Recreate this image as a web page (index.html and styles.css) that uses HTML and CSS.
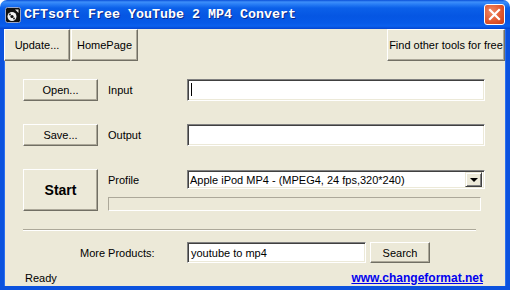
FILE: index.html
```html
<!DOCTYPE html>
<html lang="en">
<head>
  <meta charset="UTF-8">
  <title>CFTsoft Free YouTube 2 MP4 Convert</title>
  <link rel="stylesheet" href="styles.css">
</head>
<body>
  <div class="window">
    <div class="titlebar">
      <svg class="app-icon" width="16" height="16" viewBox="0 0 16 16">
        <rect x="0.5" y="0.5" width="15" height="15" rx="2" fill="#101010" stroke="#9aa6c8"/>
        <circle cx="7" cy="9.5" r="4.5" fill="#f2f2f2"/>
        <circle cx="7" cy="9.5" r="1.6" fill="#101010"/>
        <circle cx="5" cy="7.5" r="0.9" fill="#101010"/>
        <circle cx="9" cy="11.5" r="0.9" fill="#101010"/>
        <path d="M10 2.5 L13.5 2.5 L13.5 6 Z" fill="#e8e8e8"/>
      </svg>
      <span class="title">CFTsoft Free YouTube 2 MP4 Convert</span>
      <div class="close">
        <svg width="21" height="21" viewBox="0 0 21 21">
          <path d="M6 6 L15 15 M15 6 L6 15" stroke="#fff" stroke-width="2.2" stroke-linecap="square"/>
        </svg>
      </div>
    </div>

    <div class="client">
      <div class="toolbar">
        <button class="btn tb-update">Update...</button>
        <button class="btn tb-home">HomePage</button>
        <button class="btn tb-find">Find other tools for free</button>
      </div>

      <div class="form">
        <div class="row first">
          <button class="btn side">Open...</button>
          <span class="label">Input</span>
          <div class="field"><span class="caret"></span></div>
        </div>

        <div class="row">
          <button class="btn side">Save...</button>
          <span class="label">Output</span>
          <div class="field"></div>
        </div>

        <div class="row start-row">
          <button class="btn start">Start</button>
          <div class="profile-block">
            <div class="profile-line">
              <span class="label profile-label">Profile</span>
              <div class="select">
                <span class="select-text">Apple iPod MP4 - (MPEG4, 24 fps,320*240)</span>
                <span class="drop"><span class="arrow"></span></span>
              </div>
            </div>
            <div class="progress"></div>
          </div>
        </div>

        <div class="separator"></div>

        <div class="more-row">
          <span class="more-label">More Products:</span>
          <div class="field small">youtube to mp4</div>
          <button class="btn search">Search</button>
        </div>
      </div>

      <div class="status">
        <span>Ready</span>
        <a class="site-link" href="#">www.changeformat.net</a>
      </div>
    </div>
  </div>
</body>
</html>
```

FILE: styles.css
```css
* {
  box-sizing: border-box;
}
body {
  margin: 0;
  background: #fff;
  font-family: "Liberation Sans", Arial, sans-serif;
  font-size: 11px;
  color: #000;
}
.window {
  width: 510px;
  height: 290px;
  display: flex;
  flex-direction: column;
}

/* title bar */
.titlebar {
  height: 29px;
  flex: none;
  display: flex;
  align-items: center;
  padding: 0 5px;
  border-radius: 7px 7px 0 0;
  background: linear-gradient(#0a4fd8 0px, #3d8ffa 2px, #2a7ff6 4px, #0b60e9 8px, #0556e3 16px, #0659e8 23px, #0b60ee 26px, #0344d0 29px);
  color: #fff;
}
.app-icon {
  flex: none;
  margin-right: 3px;
}
.title {
  flex: 1;
  font-family: "Liberation Mono", "Courier New", monospace;
  font-weight: bold;
  font-size: 13.33px;
  text-shadow: 1px 1px #0a2a8a;
  white-space: nowrap;
}
.close {
  width: 21px;
  height: 21px;
  border: 1px solid #fff;
  border-radius: 3px;
  background: radial-gradient(circle at 35% 35%, #f08a66, #e0552c 60%, #c63d17);
}
.close svg {
  display: block;
  margin: -1px;
}

/* client area */
.client {
  flex: 1;
  display: flex;
  flex-direction: column;
  background: #ece9d8;
  border: 4px solid #0b52de;
  border-top: 0;
  box-shadow: inset 1px 0 #2a6ff0, inset -1px 0 #2a6ff0;
}
.btn {
  font: inherit;
  color: #000;
  background: #ece9d8;
  border: 1px solid;
  border-color: #fff #716f64 #716f64 #fff;
  box-shadow: inset -1px -1px #aca899;
  padding: 0;
}
.toolbar {
  display: flex;
  height: 32px;
  flex: none;
}
.tb-update {
  width: 66px;
}
.tb-home {
  width: 67px;
  margin-left: 1px;
}
.tb-find {
  width: 118px;
  margin-left: auto;
  margin-right: 1px;
}

.form {
  padding-left: 19px;
}
.row {
  display: flex;
  align-items: center;
  height: 22px;
  margin-top: 23px;
}
.row.first {
  margin-top: 18px;
}
.side {
  width: 75px;
  height: 22px;
}
.label {
  width: 79px;
  margin-left: 10px;
  flex: none;
}
.field {
  width: 298px;
  height: 22px;
  background: #fff;
  border: 1px solid;
  border-color: #808080 #fff #fff #808080;
  box-shadow: inset 1px 1px #404040, inset -1px -1px #ece9d8;
  padding: 3px 3px;
  line-height: 14px;
}
.caret {
  display: block;
  width: 1px;
  height: 13px;
  background: #000;
}

.start-row {
  height: 42px;
  align-items: stretch;
}
.start {
  width: 75px;
  height: 42px;
  font-size: 14px;
  font-weight: bold;
}
.profile-block {
  display: flex;
  flex-direction: column;
  margin-left: 10px;
}
.profile-line {
  display: flex;
  align-items: center;
  margin-top: 1px;
  height: 19px;
}
.profile-label {
  margin-left: 0;
}
.select {
  width: 298px;
  height: 19px;
  display: flex;
  align-items: center;
  justify-content: space-between;
  background: #fff;
  border: 1px solid;
  border-color: #808080 #fff #fff #808080;
  box-shadow: inset 1px 1px #404040, inset -1px -1px #ece9d8;
  padding: 2px;
}
.select-text {
  white-space: nowrap;
}
.drop {
  width: 17px;
  height: 15px;
  display: flex;
  align-items: center;
  justify-content: center;
  background: #ece9d8;
  border: 1px solid;
  border-color: #ece9d8 #404040 #404040 #ece9d8;
  box-shadow: inset 1px 1px #fff, inset -1px -1px #808080;
}
.arrow {
  width: 0;
  height: 0;
  border-left: 4px solid transparent;
  border-right: 4px solid transparent;
  border-top: 4px solid #000;
  margin-top: 1px;
}
.progress {
  margin-top: 8px;
  width: 373px;
  height: 14px;
  border: 1px solid;
  border-color: #aca899 #fff #fff #aca899;
}

.separator {
  margin-top: 18px;
  width: 453px;
  height: 2px;
  border-top: 1px solid #aca899;
  border-bottom: 1px solid #fff;
}
.more-row {
  display: flex;
  align-items: center;
  margin-top: 11px;
  height: 21px;
}
.more-label {
  width: 164px;
  padding-left: 57px;
}
.field.small {
  width: 179px;
  height: 21px;
  padding: 3px 3px;
}
.search {
  width: 60px;
  height: 21px;
  margin-left: 4px;
}

.status {
  margin-top: auto;
  display: flex;
  justify-content: space-between;
  align-items: center;
  padding: 0 23px 1px 21px;
  height: 16px;
}
.site-link {
  color: #0000ee;
  font-weight: bold;
  font-size: 12px;
  text-decoration: underline;
}
```
